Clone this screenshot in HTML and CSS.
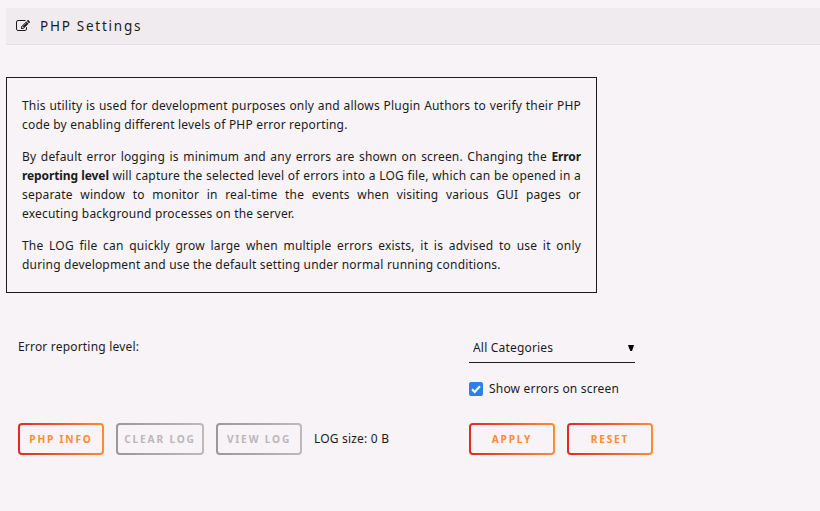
FILE: index.html
```
<!DOCTYPE html>
<html lang="en">

<head>
    <meta charset="UTF-8">
    <meta name="viewport" content="width=device-width, initial-scale=1.0">
    <title>PHP Settings</title>
    <link rel="stylesheet" href="styles.css">
</head>

<body>
    <div class="title">
        <svg class="icon" viewBox="0 0 1792 1792">
            <path d="M888 1184l116-116-152-152-116 116v56h96v96h56zm440-720q-16-16-33 1l-350 350q-17 17-1 33t33-1l350-350q17-17 1-33zm80 594v190q0 119-84.500 203.500t-203.500 84.500h-832q-119 0-203.500-84.500t-84.500-203.500v-832q0-119 84.500-203.500t203.500-84.500h832q63 0 117 25 15 7 18 23 3 17-9 29l-49 49q-14 14-32 8-23-6-45-6h-832q-66 0-113 47t-47 113v832q0 66 47 113t113 47h832q66 0 113-47t47-113v-126q0-13 9-22l64-64q15-15 35-7t20 29zm-96-738l288 288-672 672h-288v-288zm444 132l-92 92-288-288 92-92q28-28 68-28t68 28l152 152q28 28 28 68t-28 68z"/>
        </svg>
        <h1>PHP Settings</h1>
    </div>

    <div class="notice">
        <p>This utility is used for development purposes only and allows Plugin Authors to verify their PHP code by enabling different levels of PHP error reporting.</p>
        <p>By default error logging is minimum and any errors are shown on screen. Changing the <b>Error reporting level</b> will capture the selected level of errors into a LOG file, which can be opened in a separate window to monitor in real-time the events when visiting various GUI pages or executing background processes on the server.</p>
        <p>The LOG file can quickly grow large when multiple errors exists, it is advised to use it only during development and use the default setting under normal running conditions.</p>
    </div>

    <form class="settings">
        <label class="label" for="level">Error reporting level:</label>
        <div class="fields">
            <div class="select-wrap">
                <select id="level">
                    <option>All Categories</option>
                </select>
                <svg class="arrow" viewBox="0 0 6 6"><path d="M0 0h6L5 3 4 6H2.500L1 3z"/></svg>
            </div>
            <label class="check">
                <input type="checkbox" checked>
                <svg class="tick" viewBox="0 0 14 14"><path d="M3 7.300l2.700 2.700L11 4.300"/></svg>
                <span>Show errors on screen</span>
            </label>
        </div>
        <div class="buttons">
            <button type="button">PHP INFO</button>
            <button type="button" class="clear" disabled>CLEAR LOG</button>
            <button type="button" disabled>VIEW LOG</button>
            <span class="log-size">LOG size: 0 B</span>
        </div>
        <div class="buttons">
            <button type="button">APPLY</button>
            <button type="button">RESET</button>
        </div>
    </form>
</body>

</html>
```
FILE: styles.css
```
/* General styling */
* {
    box-sizing: border-box;
}

body {
    margin: 0;
    padding: 8px 0 0 6px;
    background: #f7f3f7;
    color: #1c1b1b;
    font-family: "Noto Sans", sans-serif;
    font-size: 12px;
    line-height: 19px;
    letter-spacing: 0.19px;
}

.title {
    display: flex;
    align-items: center;
    height: 37px;
    padding: 0 10px;
    background: #efebef;
    border-bottom: 1px solid #e3dfe3;
}

.icon {
    width: 14px;
    height: 14px;
    margin-right: 10px;
    fill: #1c1b1b;
}

h1 {
    margin: 0;
    font-size: 13.5px;
    font-weight: 400;
    letter-spacing: 1.75px;
}

/* Description box */
.notice {
    width: 591px;
    height: 216px;
    margin-top: 32px;
    padding: 18px 15px;
    border: 1px solid #1c1b1b;
    text-align: justify;
}

.notice p {
    margin: 0 0 13px;
}

.notice b {
    letter-spacing: -0.1px;
}

/* Form */
.settings {
    display: grid;
    grid-template-columns: 451px 1fr;
    margin: 44px 0 0 12px;
}

.fields {
    height: 86px;
}

.select-wrap {
    position: relative;
    width: 166px;
    height: 26px;
    border-bottom: 1px solid #1c1b1b;
}

select {
    display: block;
    appearance: none;
    width: 100%;
    height: 21px;
    padding: 0 4px;
    border: none;
    background: none;
    color: inherit;
    font: inherit;
    letter-spacing: inherit;
}

.arrow {
    position: absolute;
    right: 1px;
    top: 8px;
    width: 6px;
    height: 6px;
}

.check {
    position: relative;
    display: flex;
    align-items: center;
    margin-top: 16px;
}

.check input {
    appearance: none;
    width: 14px;
    height: 14px;
    margin: 0 6px 0 0;
    border-radius: 2px;
    background: #2f80e4;
}

.tick {
    position: absolute;
    left: 0;
    width: 14px;
    height: 14px;
    fill: none;
    stroke: #fff;
    stroke-width: 2;
}

.buttons {
    display: flex;
    align-items: center;
    gap: 12px;
}

.log-size {
    padding-bottom: 2px;
}

button {
    width: 86px;
    height: 32px;
    padding: 0;
    border: 2px solid transparent;
    border-radius: 4px;
    background: linear-gradient(#f7f3f7, #f7f3f7) padding-box, linear-gradient(90deg, #e22828, #ff8c2f) border-box;
    color: #ff8c2f;
    font-family: inherit;
    font-size: 10.2px;
    font-weight: 700;
    letter-spacing: 1.8px;
    white-space: nowrap;
}

button:disabled {
    background: linear-gradient(#f7f3f7, #f7f3f7) padding-box, linear-gradient(90deg, #999, #bbb) border-box;
    color: #bbb7bb;
}

.clear {
    width: 88px;
}
```
